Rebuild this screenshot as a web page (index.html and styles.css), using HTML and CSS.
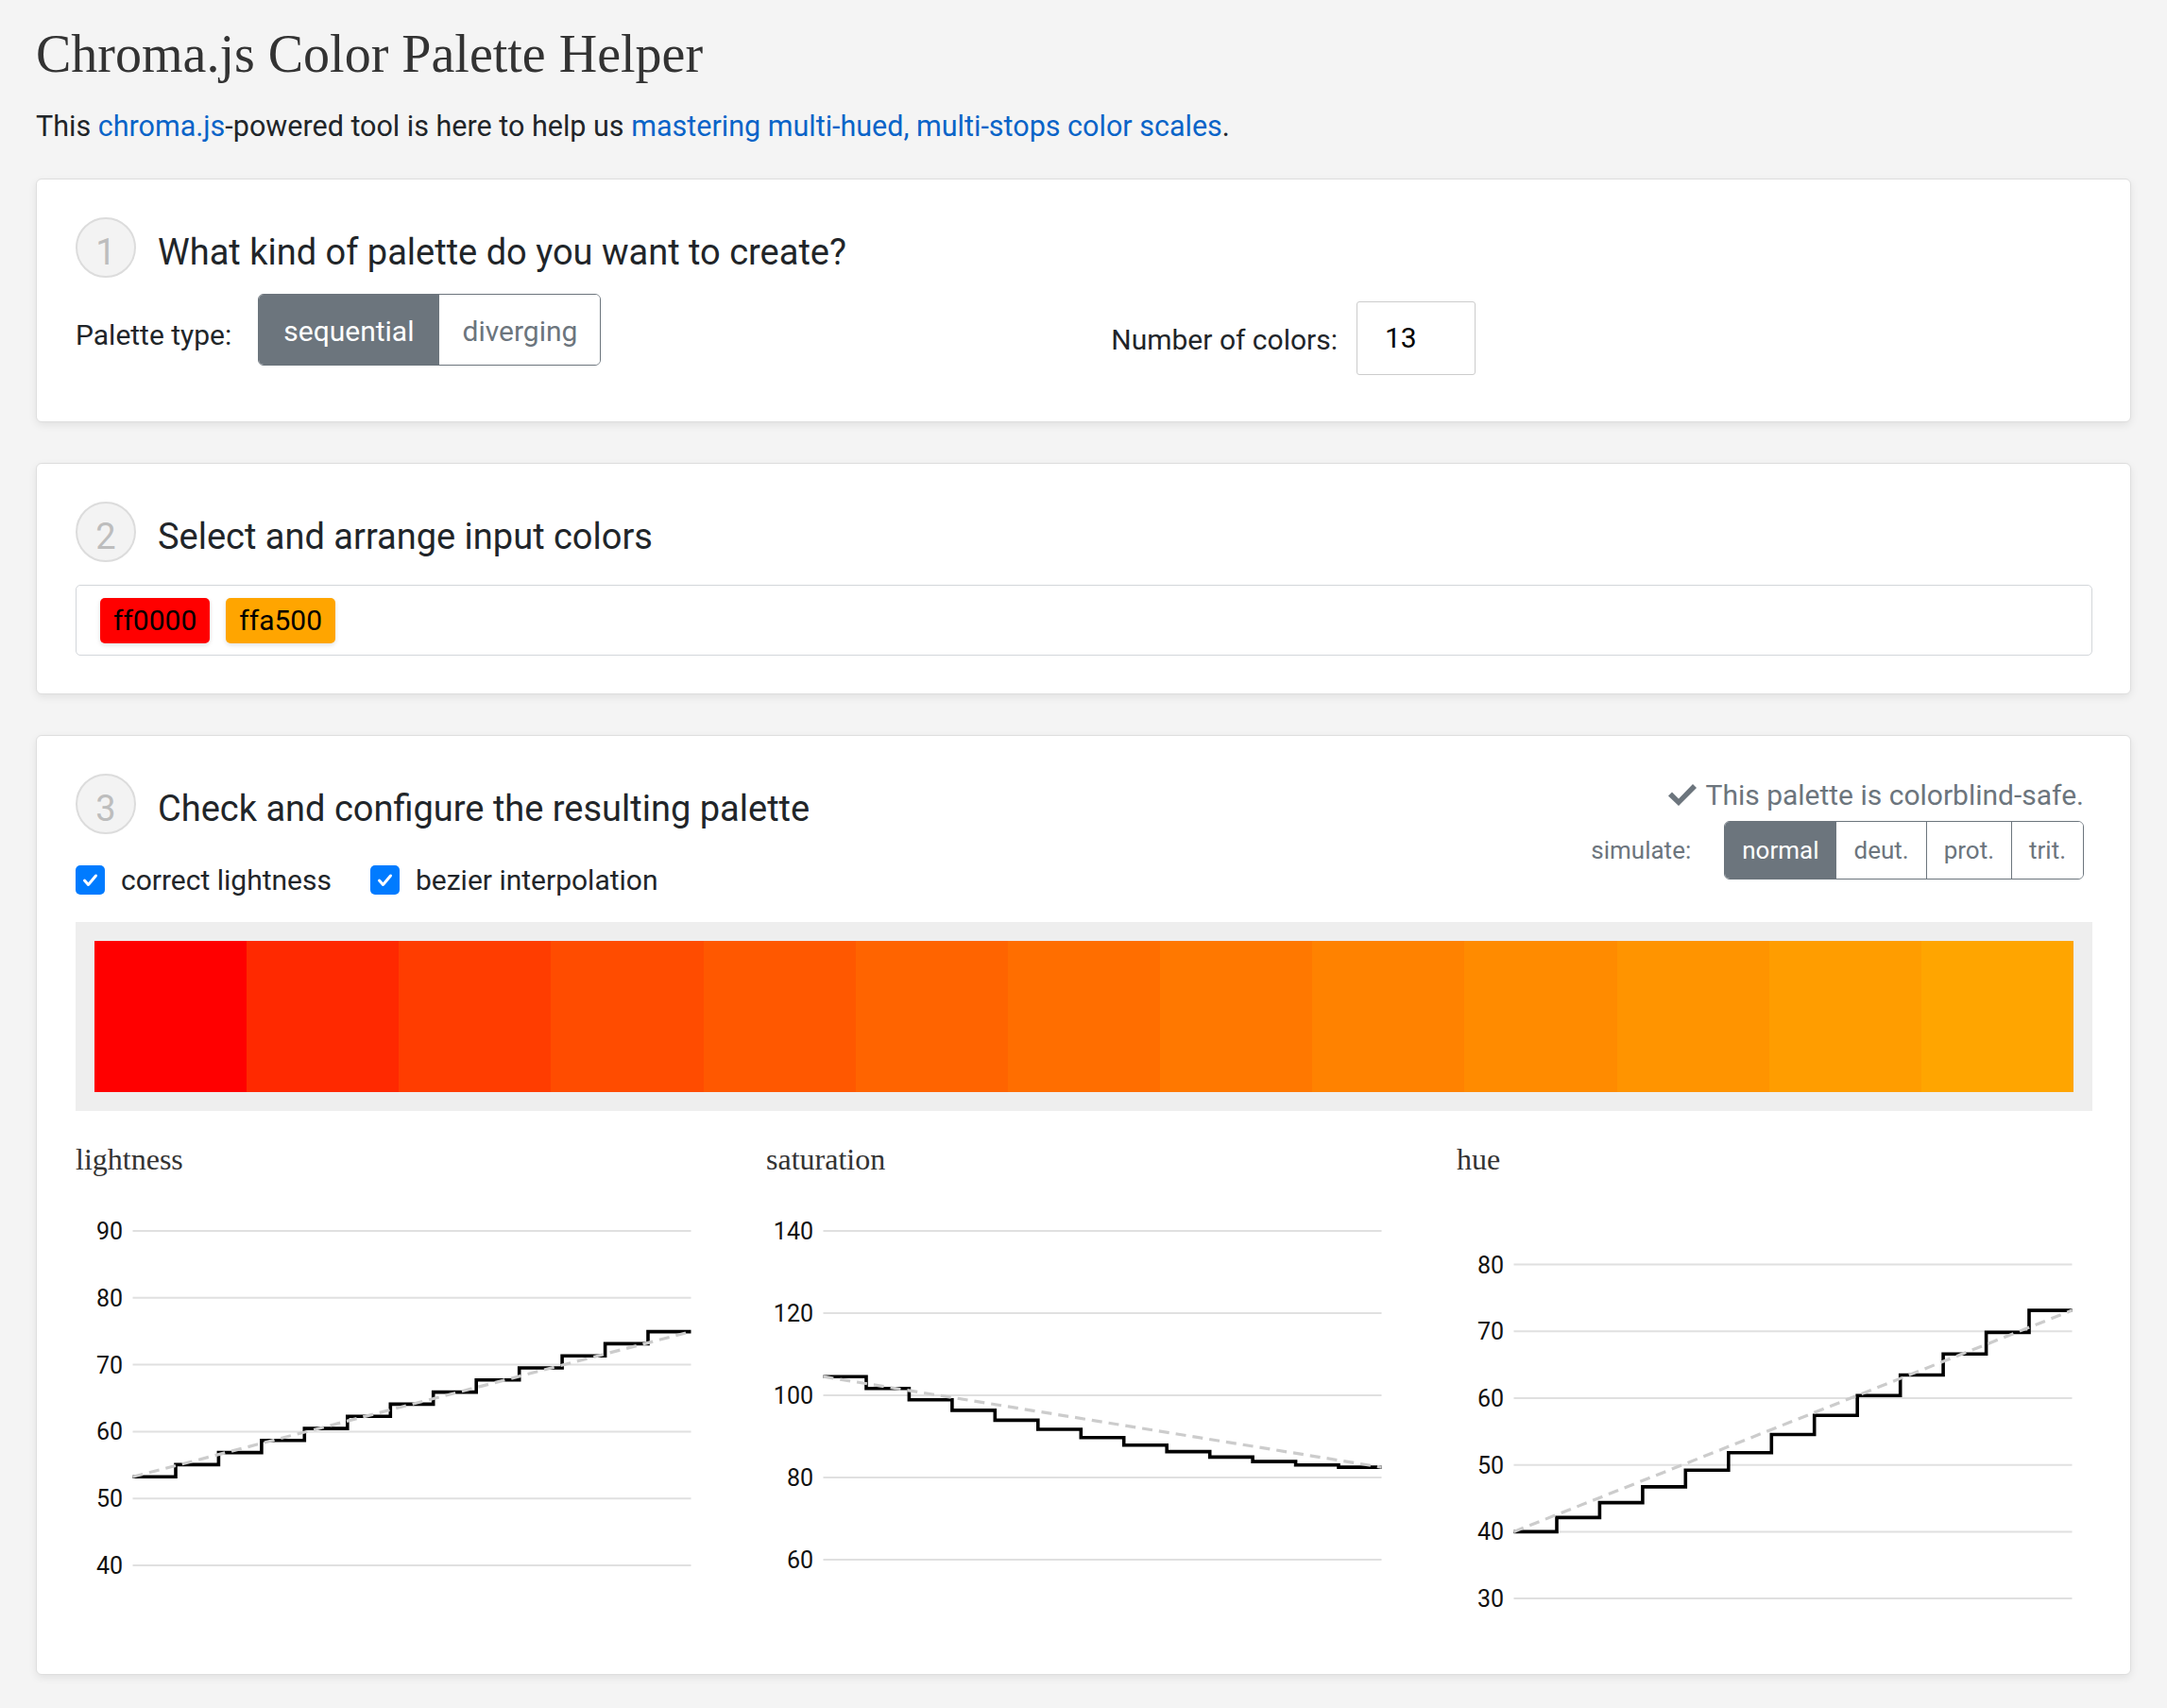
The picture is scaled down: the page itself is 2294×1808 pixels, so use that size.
FILE: index.html
```html
<!DOCTYPE html>
<html lang="en">
<head>
<meta charset="utf-8">
<title>Chroma.js Color Palette Helper</title>
<link rel="stylesheet" href="styles.css">
</head>
<body>
<div class="page">
  <h1 class="title">Chroma.js Color Palette Helper</h1>
  <p class="intro">This <a href="#">chroma.js</a>-powered tool is here to help us <a href="#">mastering multi-hued, multi-stops color scales</a>.</p>

  <section class="card card-first">
    <div class="step-head">
      <span class="step-num">1</span>
      <h2 class="step-title">What kind of palette do you want to create?</h2>
    </div>
    <div class="type-row">
      <div class="type-col">
        <span class="type-label">Palette type:</span>
        <div class="btn-group">
          <span class="btn active">sequential</span>
          <span class="btn btn-narrow">diverging</span>
        </div>
      </div>
      <div class="num-col">
        <span class="num-label">Number of colors:</span>
        <span class="num-input">13</span>
      </div>
    </div>
  </section>

  <section class="card">
    <div class="step-head">
      <span class="step-num">2</span>
      <h2 class="step-title">Select and arrange input colors</h2>
    </div>
    <div class="colors-box">
      <span class="tag tag-red">ff0000</span>
      <span class="tag tag-orange">ffa500</span>
    </div>
  </section>

  <section class="card">
    <div class="head-row">
      <div class="head-left">
        <div class="step-head">
          <span class="step-num">3</span>
          <h2 class="step-title">Check and configure the resulting palette</h2>
        </div>
        <div class="check-row">
          <label class="check-item">
            <span class="cbox"><svg width="31" height="31" viewBox="0 0 31 31"><path d="M9.5 16 L13.5 20.5 L21.5 11" fill="none" stroke="#fff" stroke-width="3" stroke-linecap="round" stroke-linejoin="round"/></svg></span>
            <span>correct lightness</span>
          </label>
          <label class="check-item">
            <span class="cbox"><svg width="31" height="31" viewBox="0 0 31 31"><path d="M9.5 16 L13.5 20.5 L21.5 11" fill="none" stroke="#fff" stroke-width="3" stroke-linecap="round" stroke-linejoin="round"/></svg></span>
            <span>bezier interpolation</span>
          </label>
        </div>
      </div>
      <div class="head-right">
        <div class="safe">
          <svg class="safe-icon" width="32" height="27" viewBox="0 0 32 27"><path d="M1 14.5 L5 10.5 L12 17.5 L27 2 L31 6 L12 25 Z" fill="#6c757d"/></svg>
          <span>This palette is colorblind-safe.</span>
        </div>
        <div class="sim-row">
          <span class="sim-label">simulate:</span>
          <div class="btn-group btn-group-sm">
            <span class="btn active">normal</span>
            <span class="btn">deut.</span>
            <span class="btn">prot.</span>
            <span class="btn">trit.</span>
          </div>
        </div>
      </div>
    </div>

    <div class="palette">
      <div class="strip">
        <span class="sw" style="background:#ff0000"></span>
        <span class="sw" style="background:#ff2900"></span>
        <span class="sw" style="background:#ff3d00"></span>
        <span class="sw" style="background:#ff4c00"></span>
        <span class="sw" style="background:#ff5800"></span>
        <span class="sw" style="background:#ff6400"></span>
        <span class="sw" style="background:#ff6e00"></span>
        <span class="sw" style="background:#ff7800"></span>
        <span class="sw" style="background:#ff8200"></span>
        <span class="sw" style="background:#ff8b00"></span>
        <span class="sw" style="background:#ff9400"></span>
        <span class="sw" style="background:#ff9d00"></span>
        <span class="sw" style="background:#ffa500"></span>
      </div>
    </div>

    <div class="charts">
      <div class="chart">
        <h3 class="chart-title">lightness</h3>
        <svg class="axis" width="673" height="482" viewBox="0 0 673 482">
          <g class="grid">
            <line x1="60.5" x2="651.5" y1="53" y2="53"/>
            <line x1="60.5" x2="651.5" y1="123.8" y2="123.8"/>
            <line x1="60.5" x2="651.5" y1="194.6" y2="194.6"/>
            <line x1="60.5" x2="651.5" y1="265.4" y2="265.4"/>
            <line x1="60.5" x2="651.5" y1="336.2" y2="336.2"/>
            <line x1="60.5" x2="651.5" y1="407" y2="407"/>
          </g>
          <g class="ticks">
            <text x="50" y="62">90</text>
            <text x="50" y="132.8">80</text>
            <text x="50" y="203.6">70</text>
            <text x="50" y="274.4">60</text>
            <text x="50" y="345.2">50</text>
            <text x="50" y="416">40</text>
          </g>
          <path class="steps" d="M60.5,313.3 H106 V300.4 H151.4 V287.6 H196.9 V274.8 H242.3 V262.1 H287.8 V249.3 H333.3 V236.4 H378.7 V223.6 H424.2 V210.8 H469.7 V198 H515.1 V185.3 H560.6 V172.4 H606 V159.6 H651.5"/>
          <path class="trend" d="M60.5,313.3 L651.5,159.6"/>
        </svg>
      </div>
      <div class="chart">
        <h3 class="chart-title">saturation</h3>
        <svg class="axis" width="673" height="482" viewBox="0 0 673 482">
          <g class="grid">
            <line x1="60.5" x2="651.5" y1="53" y2="53"/>
            <line x1="60.5" x2="651.5" y1="140" y2="140"/>
            <line x1="60.5" x2="651.5" y1="227" y2="227"/>
            <line x1="60.5" x2="651.5" y1="314" y2="314"/>
            <line x1="60.5" x2="651.5" y1="401" y2="401"/>
          </g>
          <g class="ticks">
            <text x="50" y="62">140</text>
            <text x="50" y="149">120</text>
            <text x="50" y="236">100</text>
            <text x="50" y="323">80</text>
            <text x="50" y="410">60</text>
          </g>
          <path class="steps" d="M60.5,207.2 H106 V219.8 H151.4 V231.7 H196.9 V242.9 H242.3 V253.4 H287.8 V263 H333.3 V271.8 H378.7 V279.7 H424.2 V286.6 H469.7 V292.4 H515.1 V297.1 H560.6 V300.7 H606 V303.1 H651.5"/>
          <path class="trend" d="M60.5,207.2 L651.5,303.1"/>
        </svg>
      </div>
      <div class="chart">
        <h3 class="chart-title">hue</h3>
        <svg class="axis" width="673" height="482" viewBox="0 0 673 482">
          <g class="grid">
            <line x1="60.5" x2="651.5" y1="88.6" y2="88.6"/>
            <line x1="60.5" x2="651.5" y1="159.3" y2="159.3"/>
            <line x1="60.5" x2="651.5" y1="230" y2="230"/>
            <line x1="60.5" x2="651.5" y1="300.7" y2="300.7"/>
            <line x1="60.5" x2="651.5" y1="371.4" y2="371.4"/>
            <line x1="60.5" x2="651.5" y1="442.1" y2="442.1"/>
          </g>
          <g class="ticks">
            <text x="50" y="97.6">80</text>
            <text x="50" y="168.3">70</text>
            <text x="50" y="239">60</text>
            <text x="50" y="309.7">50</text>
            <text x="50" y="380.4">40</text>
            <text x="50" y="451.1">30</text>
          </g>
          <path class="steps" d="M60.5,371.4 H106 V356.4 H151.4 V340.6 H196.9 V323.9 H242.3 V306.3 H287.8 V287.8 H333.3 V268.5 H378.7 V248.3 H424.2 V227.3 H469.7 V205.5 H515.1 V183.3 H560.6 V160.4 H606 V137.1 H651.5"/>
          <path class="trend" d="M60.5,371.4 L651.5,137.1"/>
        </svg>
      </div>
    </div>
  </section>
</div>
</body>
</html>
```

FILE: styles.css
```css
html, body {
  margin: 0;
  padding: 0;
}

body {
  background: #f4f4f4;
  font-family: Roboto, "Noto Sans", "Liberation Sans", sans-serif;
  color: #212529;
}

.page {
  padding: 0 38px 40px 38px;
}

.title {
  font-family: "Liberation Serif", "Times New Roman", serif;
  font-weight: normal;
  font-size: 56px;
  line-height: 67px;
  margin: 24px 0 0 0;
  color: #333;
}

.intro {
  font-size: 30.5px;
  line-height: 45px;
  margin: 20px 0 0 0;
}

.intro a {
  color: #0a64c8;
  text-decoration: none;
}

.card {
  background: #fff;
  border: 1px solid #dedede;
  border-radius: 6px;
  box-shadow: 0 3px 8px rgba(0, 0, 0, 0.08);
  padding: 40px 40px 40px 41px;
  margin-top: 43px;
}

.card-first {
  margin-top: 33px;
}

/* step headings */
.step-head {
  display: flex;
  align-items: flex-start;
  gap: 23px;
  height: 64px;
}

.step-num {
  flex: none;
  width: 64px;
  height: 64px;
  box-sizing: border-box;
  border: 2px solid #dcdcdc;
  border-radius: 50%;
  background: #f3f3f3;
  color: #bdbdbd;
  font-size: 38px;
  line-height: 54px;
  padding-top: 8px;
  text-align: center;
}

.step-title {
  margin: 0;
  font-size: 38px;
  font-weight: 400;
  line-height: 54px;
  padding-top: 10px;
  color: #212529;
  white-space: nowrap;
}

/* card 1 */
.type-row {
  display: flex;
  align-items: flex-start;
  margin-top: 17px;
  margin-bottom: 9px;
}

.type-col {
  width: 1067px;
  display: flex;
  align-items: flex-start;
  gap: 28px;
}

.type-label {
  font-size: 30px;
  line-height: 45px;
  margin-top: 21px;
}

.btn-group {
  display: inline-flex;
  border: 1px solid #6c757d;
  border-radius: 6px;
  overflow: hidden;
  height: 76px;
  box-sizing: border-box;
}

.btn {
  font-size: 30px;
  line-height: 71px;
  padding: 3px 26px 0 26px;
  color: #6c757d;
  background: #fff;
}

.btn-narrow {
  padding-left: 24px;
  padding-right: 24px;
}

.btn + .btn {
  border-left: 1px solid #6c757d;
}

.btn.active {
  background: #6c757d;
  color: #fff;
}

.num-col {
  display: flex;
  align-items: flex-start;
  gap: 20px;
}

.num-label {
  width: 269px;
  text-align: right;
  font-size: 30px;
  line-height: 45px;
  margin-top: 26px;
  white-space: nowrap;
}

.num-input {
  margin-top: 8px;
  width: 126px;
  height: 78px;
  box-sizing: border-box;
  border: 1px solid #cccccc;
  border-radius: 3px;
  font-size: 30px;
  line-height: 76px;
  padding-left: 29px;
  color: #000;
}

/* card 2 */
.colors-box {
  margin-top: 24px;
  border: 1px solid #d3d6da;
  border-radius: 5px;
  padding: 13px 24px 12px 25px;
  display: flex;
  gap: 17px;
}

.tag {
  font-size: 30px;
  line-height: 48px;
  padding: 0 14px;
  border-radius: 5px;
  color: #000;
  box-shadow: 0 2px 5px rgba(0, 0, 0, 0.12);
}

.tag-red {
  background: #ff0000;
}

.tag-orange {
  background: #ffa500;
}

/* card 3 */
.head-row {
  display: flex;
  justify-content: space-between;
  align-items: flex-start;
}

.check-row {
  margin-top: 26px;
  display: flex;
  align-items: center;
  gap: 41px;
  font-size: 30px;
  line-height: 45px;
}

.check-item {
  display: flex;
  align-items: center;
  gap: 17px;
}

.cbox {
  display: block;
  width: 31px;
  height: 31px;
  border-radius: 5px;
  background: #007bff;
}

.cbox svg {
  display: block;
}

.head-right {
  margin-right: 9px;
  display: flex;
  flex-direction: column;
  align-items: flex-end;
}

.safe {
  display: flex;
  align-items: center;
  gap: 8px;
  font-size: 30px;
  line-height: 45px;
  color: #6c757d;
}

.safe-icon {
  display: block;
}

.sim-row {
  display: flex;
  align-items: center;
  gap: 35px;
  margin-top: 5px;
}

.sim-label {
  font-size: 26px;
  color: #6c757d;
}

.btn-group-sm {
  height: 62px;
}

.btn-group-sm .btn {
  font-size: 26px;
  line-height: 60px;
  padding: 0 18px;
}

.palette {
  margin-top: 22px;
  background: #eeeeee;
  padding: 20px;
}

.strip {
  display: flex;
  height: 160px;
}

.sw {
  flex: 1;
}

.charts {
  margin-top: 32px;
  display: grid;
  grid-template-columns: repeat(3, 673px);
  column-gap: 58px;
}

.chart-title {
  font-family: "Liberation Serif", "Times New Roman", serif;
  font-weight: normal;
  font-size: 32px;
  line-height: 38px;
  margin: 0 0 4px 0;
  color: #333;
}

.axis {
  display: block;
}

.grid line {
  stroke: #e0e0e0;
  stroke-width: 2;
}

.ticks text {
  font-family: Roboto, "Noto Sans", sans-serif;
  font-size: 25px;
  fill: #111;
  text-anchor: end;
}

.steps {
  fill: none;
  stroke: #000;
  stroke-width: 3.6;
}

.trend {
  fill: none;
  stroke: #cccccc;
  stroke-width: 3.2;
  stroke-dasharray: 11 7;
}
```
